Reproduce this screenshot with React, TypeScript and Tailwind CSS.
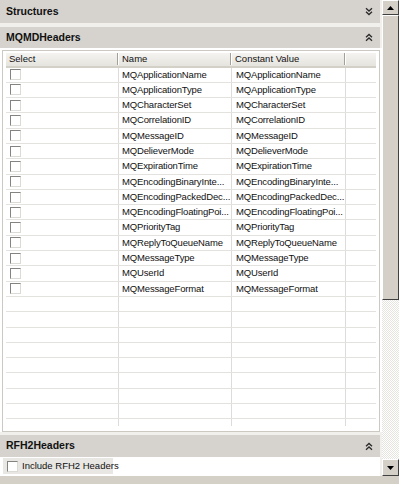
import React from "react";

const rows: [string, string][] = [
  ["MQApplicationName", "MQApplicationName"],
  ["MQApplicationType", "MQApplicationType"],
  ["MQCharacterSet", "MQCharacterSet"],
  ["MQCorrelationID", "MQCorrelationID"],
  ["MQMessageID", "MQMessageID"],
  ["MQDelieverMode", "MQDelieverMode"],
  ["MQExpirationTime", "MQExpirationTime"],
  ["MQEncodingBinaryInte...", "MQEncodingBinaryInte..."],
  ["MQEncodingPackedDec...", "MQEncodingPackedDec..."],
  ["MQEncodingFloatingPoi...", "MQEncodingFloatingPoi..."],
  ["MQPriorityTag", "MQPriorityTag"],
  ["MQReplyToQueueName", "MQReplyToQueueName"],
  ["MQMessageType", "MQMessageType"],
  ["MQUserId", "MQUserId"],
  ["MQMessageFormat", "MQMessageFormat"],
];

function Chevrons({ up }: { up?: boolean }) {
  return (
    <svg width="8" height="9" viewBox="0 0 8 9" className={up ? "rotate-180" : ""}>
      <path d="M1 1.2 L4 4 L7 1.2" fill="none" stroke="#2a2a2a" strokeWidth="1.3" />
      <path d="M1 4.8 L4 7.6 L7 4.8" fill="none" stroke="#2a2a2a" strokeWidth="1.3" />
    </svg>
  );
}

function Band({ title, up, h }: { title: string; up?: boolean; h: string }) {
  return (
    <div className={`${h} bg-[#d6d3ce] flex items-center justify-between pl-[6px] pr-[7px] w-[380px]`}>
      <span className="font-bold text-[10.5px] text-[#111]">{title}</span>
      <Chevrons up={up} />
    </div>
  );
}

function Check() {
  return (
    <div className="w-[11px] h-[11px] shrink-0 bg-white border-t border-l border-[#858380] border-r border-b border-r-[#dcdad4] border-b-[#dcdad4]" />
  );
}

function Row({ name, value }: { name?: string; value?: string }) {
  return (
    <div className="flex h-[15.3px] border-b border-[#e3e2de]">
      <div className="w-[113px] border-r border-[#dddcd8] flex items-center pl-[3.5px]">
        {name !== undefined && <Check />}
      </div>
      <div className="w-[113px] border-r border-[#dddcd8] flex items-center pl-[3px] overflow-hidden whitespace-nowrap tracking-[-0.15px]">
        {name}
      </div>
      <div className="w-[114px] border-r border-[#dddcd8] flex items-center pl-[4px] overflow-hidden whitespace-nowrap tracking-[-0.15px]">
        {value}
      </div>
      <div className="w-[30px]" />
    </div>
  );
}

function HeaderCell({ label, w, sep }: { label: string; w: string; sep?: boolean }) {
  return (
    <div className={`${w} relative flex items-center pl-[3px]`}>
      {label}
      {sep && <div className="absolute right-0 top-0 h-[12px] w-[2px] border-l border-[#a3a099] border-r border-r-white" />}
    </div>
  );
}

export default function App() {
  return (
    <div
      className="w-[399px] h-[484px] bg-[#d4d0c8] flex flex-col overflow-hidden text-[9.5px] text-[#111]"
      style={{ fontFamily: '"Liberation Sans", Arial, sans-serif' }}
    >
      <div className="flex h-[476px]">
        <div className="w-[382px] bg-[#f1f0ec] flex flex-col">
          <Band title="Structures" h="h-[23px]" />
          <div className="h-[4px]" />
          <Band title="MQMDHeaders" up h="h-[21px]" />
          <div className="bg-white h-[384px] pt-[2px] pl-[2px]">
            <div className="border border-[#cbc9c2] h-[382px] w-[378px] pt-[2px] pl-[3px]">
              <div className="flex h-[14.5px] w-[370px] bg-[linear-gradient(#f4f3f0,#e6e4de)] border-b-2 border-[#d3d0c8]">
                <HeaderCell label="Select" w="w-[113px]" sep />
                <HeaderCell label="Name" w="w-[113px]" sep />
                <HeaderCell label="Constant Value" w="w-[114px]" sep />
                <div className="w-[30px]" />
              </div>
              <div className="w-[370px]">
                {rows.map((r) => (
                  <Row key={r[0]} name={r[0]} value={r[1]} />
                ))}
                {Array.from({ length: 8 }).map((_, i) => (
                  <Row key={i} />
                ))}
                <div className="flex h-[6.6px]">
                  <div className="w-[113px] border-r border-[#dddcd8]" />
                  <div className="w-[113px] border-r border-[#dddcd8]" />
                  <div className="w-[114px] border-r border-[#dddcd8]" />
                </div>
              </div>
            </div>
          </div>
          <div className="h-[3px]" />
          <Band title="RFH2Headers" up h="h-[22px]" />
          <div className="bg-white h-[19px] pl-[3px] pt-[1px] w-[380px]">
            <div className="w-[110px] h-[16px] bg-[#e8e7e3] flex items-center pl-[4px] gap-[4px] whitespace-nowrap">
              <Check />
              <span>Include RFH2 Headers</span>
            </div>
          </div>
        </div>
        <div className="w-[17px] flex flex-col bg-[repeating-conic-gradient(#ffffff_0_25%,#e6e4de_0_50%)] bg-[length:2px_2px]">
          <div className="h-[15px] bg-[#d4d0c8] border-t border-l border-white border-r border-b border-r-[#404040] border-b-[#404040] flex items-center justify-center">
            <svg width="7" height="4" viewBox="0 0 7 4">
              <path d="M0 4 L3.5 0 L7 4 Z" fill="#000" />
            </svg>
          </div>
          <div className="h-[285px] bg-[#d4d0c8] border-t border-l border-white border-r border-b border-r-[#404040] border-b-[#404040]" />
          <div className="flex-1" />
          <div className="h-[17px] bg-[#d4d0c8] border-t border-l border-white border-r border-b border-r-[#404040] border-b-[#404040] flex items-center justify-center">
            <svg width="7" height="4" viewBox="0 0 7 4">
              <path d="M0 0 L3.5 4 L7 0 Z" fill="#000" />
            </svg>
          </div>
        </div>
      </div>
      <div className="h-[8px]" />
    </div>
  );
}
